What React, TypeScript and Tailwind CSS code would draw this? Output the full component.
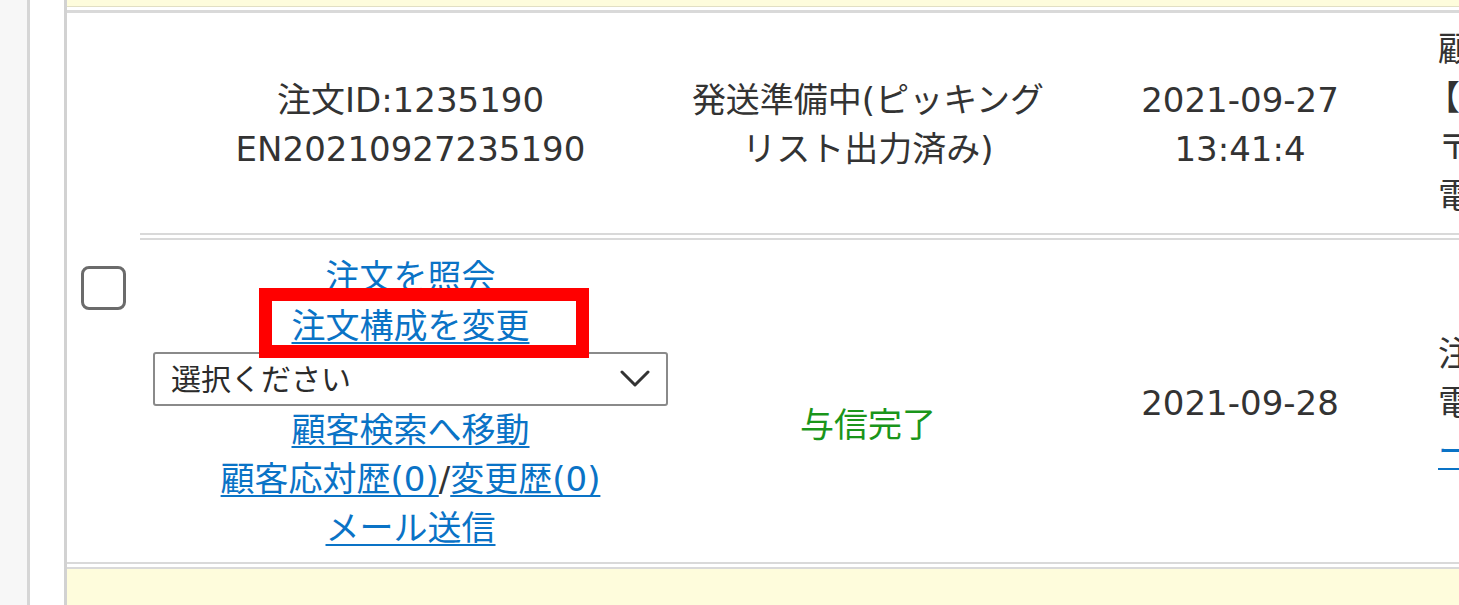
const font = { fontFamily: '"DejaVu Sans", "Noto Sans CJK JP", sans-serif' };

function Chevron() {
  return (
    <svg width="30" height="18" viewBox="0 0 30 18" fill="none">
      <polyline
        points="2,2 15,15 28,2"
        stroke="#333"
        strokeWidth="3"
        strokeLinecap="round"
        strokeLinejoin="round"
      />
    </svg>
  );
}

function A({ children }: { children: React.ReactNode }) {
  return (
    <a
      href="#"
      className="text-[#0a73c6] underline decoration-[2px] underline-offset-[4px]"
    >
      {children}
    </a>
  );
}

export default function App() {
  return (
    <div
      className="relative flex h-[605px] w-[1459px] overflow-hidden bg-white text-[34px] leading-[49px] text-[#333]"
      style={font}
    >
      {/* side gutters */}
      <div className="w-[30px] shrink-0 border-r-[3px] border-[#d6d6d6] bg-[#f7f7f7]" />
      <div className="w-[34px] shrink-0 bg-white" />

      {/* table */}
      <div className="flex min-w-0 flex-1 flex-col border-l-[3px] border-[#d2d2d2]">
        <div className="h-[7px] shrink-0 border-b border-[#e2dfc4] bg-[#fefcdc]" />
        <div className="h-[3px] shrink-0" />

        <div className="flex shrink-0 border-t-[3px] border-b-2 border-[#d9d9d9]">
          {/* checkbox cell (rowspan) */}
          <div className="flex w-[73px] shrink-0 items-center justify-center">
            <div className="h-[44px] w-[45px] rounded-[8px] border-[3px] border-[#6b6b6b] bg-white" />
          </div>

          <div className="flex min-w-0 flex-1 flex-col">
            {/* row 1 */}
            <div className="grid h-[222px] grid-cols-[541px_374px_370px_1fr] border-b-2 border-[#d9d9d9]">
              <div className="flex flex-col items-center justify-center pt-[4px] text-center">
                <span>注文ID:1235190</span>
                <span>EN20210927235190</span>
              </div>
              <div className="flex flex-col items-center justify-center pt-[4px] text-center">
                <span>発送準備中(ピッキング</span>
                <span>リスト出力済み)</span>
              </div>
              <div className="flex flex-col items-center justify-center pt-[4px] text-center">
                <span>2021-09-27</span>
                <span>13:41:4</span>
              </div>
              <div className="flex flex-col justify-center overflow-hidden whitespace-nowrap pl-[13px]">
                <span>顧客名：山田</span>
                <span>
                  <span className="-ml-[12px]">【</span>会員】
                </span>
                <span>〒123-4567</span>
                <span>電話番号</span>
              </div>
            </div>

            <div className="h-[3px]" />

            {/* row 2 */}
            <div className="grid h-[324px] grid-cols-[541px_374px_370px_1fr] border-t-2 border-[#d9d9d9]">
              <div className="flex flex-col items-center justify-center pt-[4px] text-center">
                <A>注文を照会</A>
                <A>注文構成を変更</A>
                <div className="mt-px flex h-[54px] w-[515px] items-center justify-between rounded-[3px] border-2 border-[#8a8a8a] bg-white pl-[16px] pr-[16px] text-[30px] text-[#2b2b2b]">
                  <span>選択ください</span>
                  <Chevron />
                </div>
                <A>顧客検索へ移動</A>
                <div>
                  <A>顧客応対歴(0)</A>/<A>変更歴(0)</A>
                </div>
                <A>メール送信</A>
              </div>
              <div className="flex items-center justify-center pt-[48px] text-[#1a951a]">
                与信完了
              </div>
              <div className="flex items-center justify-center pt-[4px]">2021-09-28</div>
              <div className="flex flex-col justify-center overflow-hidden whitespace-nowrap pl-[13px] pt-[4px]">
                <span>注文者</span>
                <span>電話番号</span>
                <span>
                  <A>ーー</A>
                </span>
              </div>
            </div>
          </div>
        </div>

        <div className="h-[3px] shrink-0" />
        <div className="flex-1 border-t-2 border-[#d9d9d9] bg-[#fefcdc]" />
      </div>

      {/* annotation highlight */}
      <div className="absolute left-[259px] top-[288px] h-[70px] w-[330px] border-[13px] border-[#ff0000]" />
    </div>
  );
}
